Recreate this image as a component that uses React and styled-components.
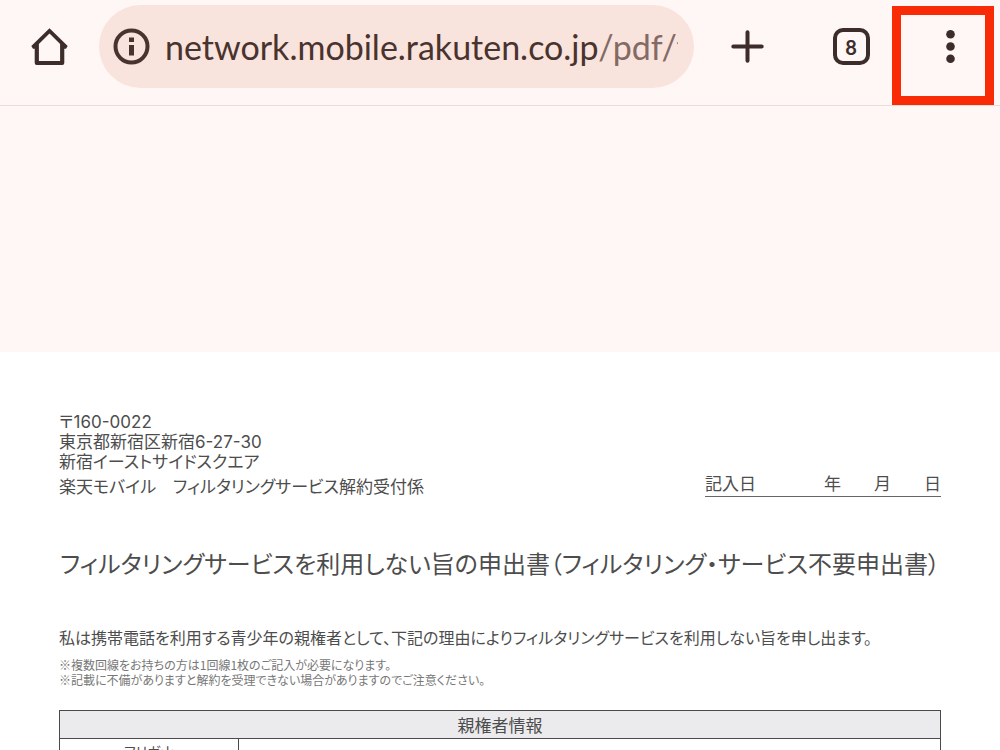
import React from 'react'
import styled, { createGlobalStyle } from 'styled-components';

const GlobalStyle = createGlobalStyle`
    * {
        box-sizing: border-box;
    }
    body {
        margin: 0;
        background-color: #fff7f5;
        font-family: "Noto Sans CJK JP", "Noto Sans", sans-serif;
    }
`

const Browser = styled.div`
    display: flex;
    flex-direction: column;
    height: 100vh;
    overflow: hidden;
`

const Toolbar = styled.header`
    display: flex;
    flex: none;
    align-items: stretch;
    padding: 5px 0 17px;
    border-bottom: 1px solid #ecdcd9;
    color: #3c2d2a;
`

const ToolbarButton = styled.button`
    display: flex;
    flex: none;
    align-items: center;
    justify-content: center;
    width: ${props => props.$width};
    padding: 0;
    border: 0;
    background: none;
    color: inherit;
    position: relative;
`

const AddressBar = styled.button`
    display: flex;
    flex: 1;
    min-width: 0;
    align-items: center;
    gap: 15px;
    height: 83px;
    padding: 0 16px 0 14px;
    border: 0;
    border-radius: 42px;
    background-color: #f9e3dd;
    color: #49332e;
    font-family: Lato, sans-serif;
    font-size: 34px;
    line-height: 48px;
    text-align: left;

    svg {
        flex: none;
    }
`

const Url = styled.span`
    flex: 1;
    min-width: 0;
    overflow: hidden;
    white-space: nowrap;
`

const UrlPath = styled.span`
    color: #846a64;
`

const TabCount = styled.span`
    display: flex;
    align-items: center;
    justify-content: center;
    width: 37px;
    height: 37px;
    border: 4px solid;
    border-radius: 10px;
    font: 700 20px/20px Lato, sans-serif;
`

const Highlight = styled.span`
    position: absolute;
    top: 1px;
    right: 6px;
    bottom: -17px;
    left: -9px;
    border: 9px solid #f92a06;
    pointer-events: none;
`

const Sheet = styled.main`
    flex: 1 0 auto;
    margin-top: 246px;
    padding: 60px 59px 40px;
    background-color: #fff;
    color: #4d4d4d;
    font-feature-settings: "palt";
`

const SheetTop = styled.div`
    display: flex;
    align-items: flex-end;
    justify-content: space-between;
`

const Address = styled.address`
    font-family: Inter, "Noto Sans CJK JP", sans-serif;
    font-size: 17px;
    font-style: normal;
    line-height: 20px;
`

const Recipient = styled.div`
    margin-top: 5px;
    white-space: pre;
`

const DateLine = styled.div`
    display: flex;
    gap: 33px;
    border-bottom: 1px solid #666;
    font-size: 17px;
    line-height: 26px;
`

const DateLabel = styled.span`
    margin-right: 35px;
`

const Title = styled.h1`
    margin: 48px 0 0;
    font-size: 24px;
    font-weight: 400;
    line-height: 36px;
    text-align: center;
    white-space: nowrap;
`

const Statement = styled.p`
    margin: 44px 0 0;
    font-size: 16px;
    line-height: 24px;
    white-space: nowrap;
`

const Notes = styled.ul`
    margin: 8px 0 0;
    padding: 0;
    color: #777;
    font-size: 12px;
    line-height: 15px;
    list-style: none;
`

const InfoTable = styled.table`
    width: 100%;
    margin-top: 23px;
    border-collapse: collapse;
    table-layout: fixed;
    font-size: 17px;
    line-height: 27px;

    th, td {
        padding: 0;
        border: 1px solid #4a4a4a;
        font-weight: 400;
    }
    thead th {
        background-color: #ebebee;
    }
`

const LabelColumn = styled.col`
    width: 179px;
`

const Furigana = styled.th`
    font-size: 14px;
    line-height: 24px;
`

const HomeIcon = () => (
    <svg width="39" height="39" viewBox="0 0 39 39" fill="currentColor" fillRule="evenodd">
        <path d="M19.5 1.2L37.7 19L36 21.7H34.3V36Q34.3 38 32.3 38H6.7Q4.7 38 4.7 36V21.7H3L1.3 19ZM19.5 6.6L8.9 17V34H30.1V17Z" />
    </svg>
)

const InfoIcon = () => (
    <svg width="37" height="37" viewBox="0 0 37 37">
        <circle cx="18.5" cy="18.5" r="16" fill="none" stroke="currentColor" strokeWidth="4" />
        <path fill="currentColor" d="M16 9.5H21V14H16ZM16 17H21V27.5H16Z" />
    </svg>
)

const PlusIcon = () => (
    <svg width="35" height="35" viewBox="0 0 35 35" stroke="currentColor" strokeWidth="4" strokeLinecap="round">
        <path d="M17.5 3.3V31.7M3.3 17.5H31.7" />
    </svg>
)

const DotsIcon = () => (
    <svg width="9" height="35" viewBox="0 0 9 35" fill="currentColor">
        {[5.2, 17.5, 29.8].map(y => <circle key={y} cx="4.5" cy={y} r="4.3" />)}
    </svg>
)

const notes = [
    '※複数回線をお持ちの方は1回線1枚のご記入が必要になります。',
    '※記載に不備がありますと解約を受理できない場合がありますのでご注意ください。',
]

export const App = () => (
    <Browser lang="ja">
        <GlobalStyle />
        <Toolbar>
            <ToolbarButton $width="99px" aria-label="ホーム"><HomeIcon /></ToolbarButton>
            <AddressBar>
                <InfoIcon />
                <Url>network.mobile.rakuten.co.jp<UrlPath>/pdf/t</UrlPath></Url>
            </AddressBar>
            <ToolbarButton $width="107px" aria-label="新しいタブ"><PlusIcon /></ToolbarButton>
            <ToolbarButton $width="100px" aria-label="タブ"><TabCount>8</TabCount></ToolbarButton>
            <ToolbarButton $width="99px" aria-label="メニュー">
                <DotsIcon />
                <Highlight />
            </ToolbarButton>
        </Toolbar>
        <Sheet>
            <SheetTop>
                <Address>
                    <div>〒160-0022</div>
                    <div>東京都新宿区新宿6-27-30</div>
                    <div>新宿イーストサイドスクエア</div>
                    <Recipient>楽天モバイル　フィルタリングサービス解約受付係</Recipient>
                </Address>
                <DateLine>
                    <DateLabel>記入日</DateLabel>
                    <span>年</span>
                    <span>月</span>
                    <span>日</span>
                </DateLine>
            </SheetTop>
            <Title>フィルタリングサービスを利用しない旨の申出書（フィルタリング・サービス不要申出書）</Title>
            <Statement>私は携帯電話を利用する青少年の親権者として、下記の理由によりフィルタリングサービスを利用しない旨を申し出ます。</Statement>
            <Notes>
                {notes.map(note => <li key={note}>{note}</li>)}
            </Notes>
            <InfoTable>
                <colgroup>
                    <LabelColumn />
                    <col />
                </colgroup>
                <thead>
                    <tr>
                        <th colSpan={2}>親権者情報</th>
                    </tr>
                </thead>
                <tbody>
                    <tr>
                        <Furigana scope="row">フリガナ</Furigana>
                        <td />
                    </tr>
                </tbody>
            </InfoTable>
        </Sheet>
    </Browser>
)

export default App;
